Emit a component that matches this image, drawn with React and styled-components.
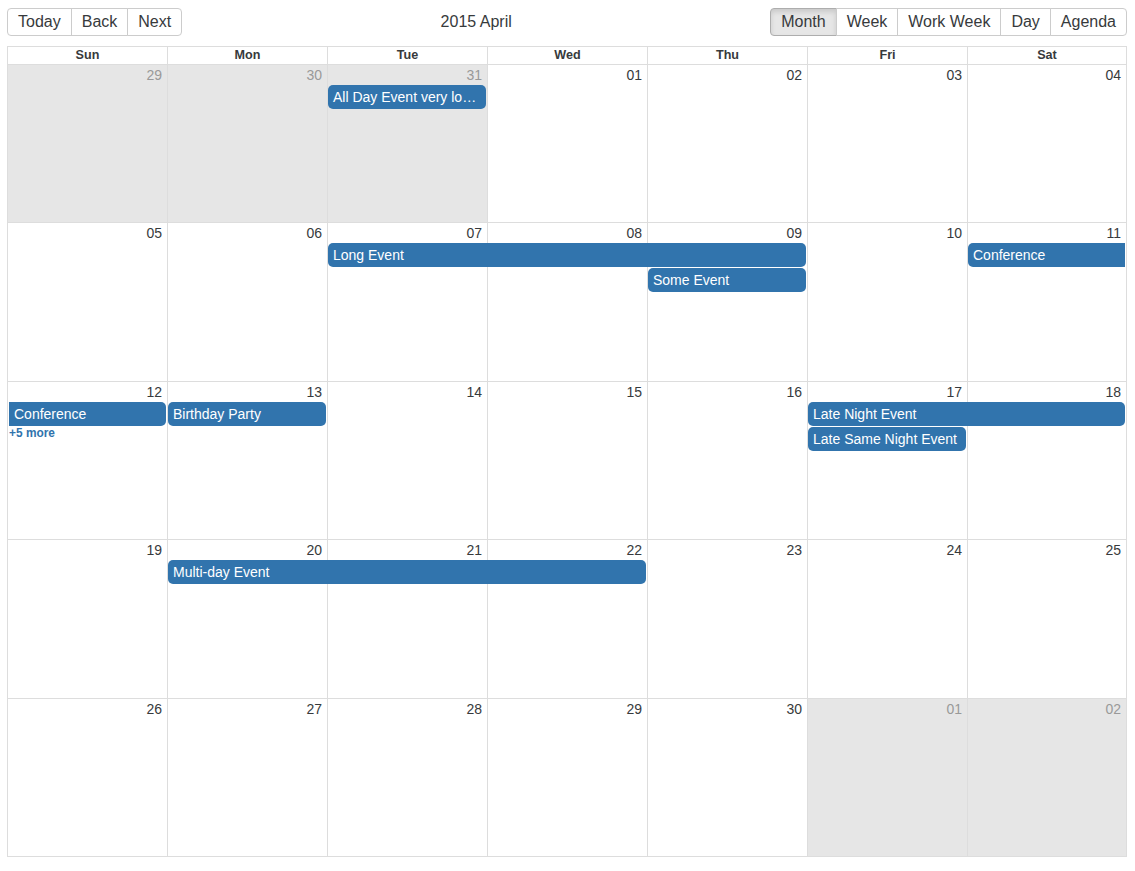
import React from "react";
import styled, { createGlobalStyle } from "styled-components";

const GlobalStyle = createGlobalStyle`
  html, body {
    margin: 0;
    padding: 0;
    background: #fff;
  }
  body {
    font-family: "Liberation Sans", Helvetica, Arial, sans-serif;
    color: #373a3c;
  }
  * { box-sizing: border-box; }
`;

const dayNames = ["Sun", "Mon", "Tue", "Wed", "Thu", "Fri", "Sat"];
const views = ["Month", "Week", "Work Week", "Day", "Agenda"];

const weeks = [
  {
    days: ["29", "30", "31", "01", "02", "03", "04"],
    off: [0, 1, 2],
    events: [{ title: "All Day Event very long title", start: 2, span: 1, row: 0 }],
  },
  {
    days: ["05", "06", "07", "08", "09", "10", "11"],
    events: [
      { title: "Long Event", start: 2, span: 3, row: 0 },
      { title: "Some Event", start: 4, span: 1, row: 1 },
      { title: "Conference", start: 6, span: 1, row: 0, contAfter: true },
    ],
  },
  {
    days: ["12", "13", "14", "15", "16", "17", "18"],
    events: [
      { title: "Conference", start: 0, span: 1, row: 0, contPrior: true },
      { title: "Birthday Party", start: 1, span: 1, row: 0 },
      { title: "Late Night Event", start: 5, span: 2, row: 0 },
      { title: "Late Same Night Event", start: 5, span: 1, row: 1 },
    ],
    more: { col: 0, row: 1, count: 5 },
  },
  {
    days: ["19", "20", "21", "22", "23", "24", "25"],
    events: [{ title: "Multi-day Event", start: 1, span: 3, row: 0 }],
  },
  {
    days: ["26", "27", "28", "29", "30", "01", "02"],
    off: [5, 6],
    events: [],
  },
];

const Page = styled.div`
  padding: 8px 8px 0 7px;
`;

const Calendar = styled.div`
  height: 849px;
  display: flex;
  flex-direction: column;
`;

const Toolbar = styled.div`
  display: flex;
  align-items: center;
  margin-bottom: 10px;
  font-size: 16px;
`;

const ButtonGroup = styled.span`
  display: inline-flex;
`;

const ToolButton = styled.button`
  font-family: inherit;
  font-size: 16px;
  height: 28px;
  padding: 0 10px;
  color: #373a3c;
  background: ${(p) => (p.$active ? "#e6e6e6" : "#fff")};
  border: 1px solid ${(p) => (p.$active ? "#adadad" : "#ccc")};
  box-shadow: ${(p) => (p.$active ? "inset 0 3px 5px rgba(0,0,0,.125)" : "none")};
  border-radius: 0;
  margin: 0;
  cursor: pointer;
  white-space: nowrap;

  & + & {
    margin-left: -1px;
  }
  &:first-child {
    border-radius: 4px 0 0 4px;
  }
  &:last-child {
    border-radius: 0 4px 4px 0;
  }
`;

const Label = styled.span`
  flex: 1;
  text-align: center;
  padding: 0 10px;
`;

const MonthView = styled.div`
  flex: 1;
  display: flex;
  flex-direction: column;
  border-top: 1px solid #ddd;
  border-bottom: 1px solid #ddd;
  font-size: 14px;
`;

const HeaderRow = styled.div`
  display: grid;
  grid-template-columns: repeat(7, 1fr);
  border-bottom: 1px solid #ddd;
`;

const HeaderCell = styled.div`
  height: 17px;
  line-height: 17px;
  text-align: center;
  font-weight: bold;
  font-size: 12.6px;
  border-left: 1px solid #ddd;
  &:last-child {
    border-right: 1px solid #ddd;
  }
`;

const WeekRow = styled.div`
  flex: 1;
  min-height: 0;
  display: grid;
  grid-template-columns: repeat(7, 1fr);
  grid-template-rows: 20px 25px 25px 1fr;
  overflow: hidden;
  & + & {
    border-top: 1px solid #ddd;
  }
`;

const DayBg = styled.div`
  grid-row: 1 / -1;
  background: ${(p) => (p.$off ? "#e6e6e6" : "transparent")};
  border-left: 1px solid #ddd;
  border-right: ${(p) => (p.$last ? "1px solid #ddd" : "none")};
`;

const DateCell = styled.div`
  grid-row: 1;
  text-align: right;
  padding-right: ${(p) => (p.$last ? 6 : 5)}px;
  line-height: 20px;
  color: ${(p) => (p.$off ? "#999" : "#373a3c")};
`;

const Segment = styled.div`
  padding: 0 ${(p) => (p.$atEnd ? 2 : 1)}px 1px ${(p) => (p.$atStart ? 2 : 1)}px;
  min-width: 0;
`;

const Event = styled.div`
  background: #3174ad;
  color: #fff;
  height: 24px;
  line-height: 20px;
  padding: 2px 5px;
  border-radius: ${(p) =>
    `${p.$prior ? 0 : 5}px ${p.$after ? 0 : 5}px ${p.$after ? 0 : 5}px ${p.$prior ? 0 : 5}px`};
  white-space: nowrap;
  overflow: hidden;
  text-overflow: ellipsis;
  cursor: pointer;
`;

const ShowMore = styled.a`
  display: block;
  font-size: 11.9px;
  font-weight: bold;
  color: #3174ad;
  line-height: 13px;
  cursor: pointer;
`;

function Week({ week }) {
  const off = week.off || [];
  return (
    <WeekRow>
      {week.days.map((d, i) => (
        <DayBg
          key={"bg" + i}
          $last={i === 6}
          $off={off.includes(i)}
          style={{ gridColumn: i + 1 }}
        />
      ))}
      {week.days.map((d, i) => (
        <DateCell
          key={"d" + i}
          $last={i === 6}
          $off={off.includes(i)}
          style={{ gridColumn: i + 1 }}
        >
          {d}
        </DateCell>
      ))}
      {week.events.map((ev, i) => (
        <Segment
          key={"e" + i}
          $atStart={ev.start === 0}
          $atEnd={ev.start + ev.span === 7}
          style={{
            gridColumn: `${ev.start + 1} / span ${ev.span}`,
            gridRow: ev.row + 2,
          }}
        >
          <Event $prior={ev.contPrior} $after={ev.contAfter} title={ev.title}>
            {ev.title}
          </Event>
        </Segment>
      ))}
      {week.more && (
        <Segment
          $atStart={week.more.col === 0}
          style={{ gridColumn: week.more.col + 1, gridRow: week.more.row + 2 }}
        >
          <ShowMore>+{week.more.count} more</ShowMore>
        </Segment>
      )}
    </WeekRow>
  );
}

export default function App() {
  return (
    <Page>
      <GlobalStyle />
      <Calendar>
        <Toolbar>
          <ButtonGroup>
            <ToolButton>Today</ToolButton>
            <ToolButton>Back</ToolButton>
            <ToolButton>Next</ToolButton>
          </ButtonGroup>
          <Label>2015 April</Label>
          <ButtonGroup>
            {views.map((v) => (
              <ToolButton key={v} $active={v === "Month"}>
                {v}
              </ToolButton>
            ))}
          </ButtonGroup>
        </Toolbar>
        <MonthView>
          <HeaderRow>
            {dayNames.map((d) => (
              <HeaderCell key={d}>{d}</HeaderCell>
            ))}
          </HeaderRow>
          {weeks.map((w, i) => (
            <Week key={i} week={w} />
          ))}
        </MonthView>
      </Calendar>
    </Page>
  );
}
